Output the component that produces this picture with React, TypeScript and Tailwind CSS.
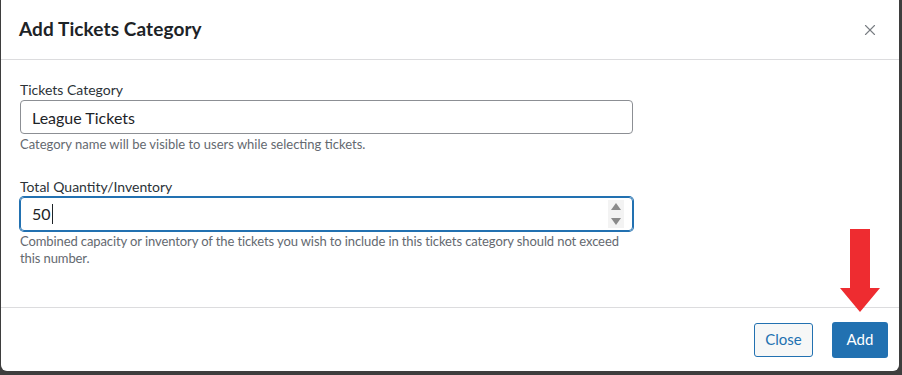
import { X } from "lucide-react"

const font = { fontFamily: "Lato, 'Noto Sans', sans-serif" }

function SpinArrows() {
  return (
    <div className="flex h-[28px] w-[16px] flex-col items-center justify-center gap-[8px] bg-[#f3f3f3]">
      <svg width="10" height="7" viewBox="0 0 10 7">
        <path d="M5 0 L10 7 L0 7 Z" fill="#8a8a8a" />
      </svg>
      <svg width="10" height="7" viewBox="0 0 10 7">
        <path d="M0 0 L10 0 L5 7 Z" fill="#8a8a8a" />
      </svg>
    </div>
  )
}

export default function App() {
  return (
    <div
      className="relative h-[375px] w-[902px] overflow-hidden bg-[#3e3e3e] pb-[4px] pl-[1px] pr-[3px]"
      style={{ fontFamily: "Lato, 'Noto Sans', sans-serif" }}
    >
      <div className="flex h-full flex-col rounded-b-[6px] bg-white text-[#1d2327]">
        {/* Header */}
        <div className="flex h-[60px] items-center justify-between border-b border-[#dcdcde] pl-[18px] pr-[20px]">
          <h2 className="text-[19px] font-bold tracking-[0.1px] text-[#1d2327]">Add Tickets Category</h2>
          <X className="h-[18px] w-[18px] text-[#787c82]" strokeWidth={1.5} />
        </div>

        {/* Body */}
        <div className="flex-1 px-[19px] pt-[20px]">
          <label className="block text-[14px] leading-[20px] text-[#2c3338]">Tickets Category</label>
          <input
            readOnly
            value="League Tickets"
            style={font}
            className="block h-[34px] w-[613px] rounded-[4px] border border-[#8c8f94] px-[11px] text-[16px] text-[#1d2327] outline-none"
          />
          <p className="mt-[1px] text-[13px] leading-[18px] text-[#646970]">
            Category name will be visible to users while selecting tickets.
          </p>

          <label className="mt-[24px] block text-[14px] leading-[20px] text-[#2c3338]">
            Total Quantity/Inventory
          </label>
          <div className="flex h-[34px] w-[613px] items-center justify-between rounded-[4px] border border-[#2271b1] pl-[11px] pr-[8px] shadow-[0_0_0_1px_#2271b1]">
            <div className="flex items-center text-[16px] text-[#1d2327]">
              50<span className="ml-[1px] h-[20px] w-px bg-[#1d2327]" />
            </div>
            <SpinArrows />
          </div>
          <p className="mt-[2px] w-[622px] text-[13px] leading-[17px] tracking-[-0.1px] text-[#646970]">
            Combined capacity or inventory of the tickets you wish to include in this tickets category should not exceed
            this number.
          </p>
        </div>

        {/* Footer */}
        <div className="flex h-[64px] items-center justify-end gap-[19px] border-t border-[#dcdcde] pr-[11px]">
          <button className="h-[34px] w-[59px] rounded-[3px] border border-[#2271b1] bg-[#f6f7f7] text-[15px] text-[#2271b1]">
            Close
          </button>
          <button className="h-[36px] w-[56px] rounded-[3px] bg-[#2271b1] text-[15px] text-white">Add</button>
        </div>
      </div>

      {/* Red arrow annotation */}
      <svg className="absolute left-[840px] top-[229px]" width="40" height="84" viewBox="0 0 40 84">
        <path d="M10 0 H30 V59 H40 L20 83 L0 59 H10 Z" fill="#ee2c30" />
      </svg>
    </div>
  )
}
